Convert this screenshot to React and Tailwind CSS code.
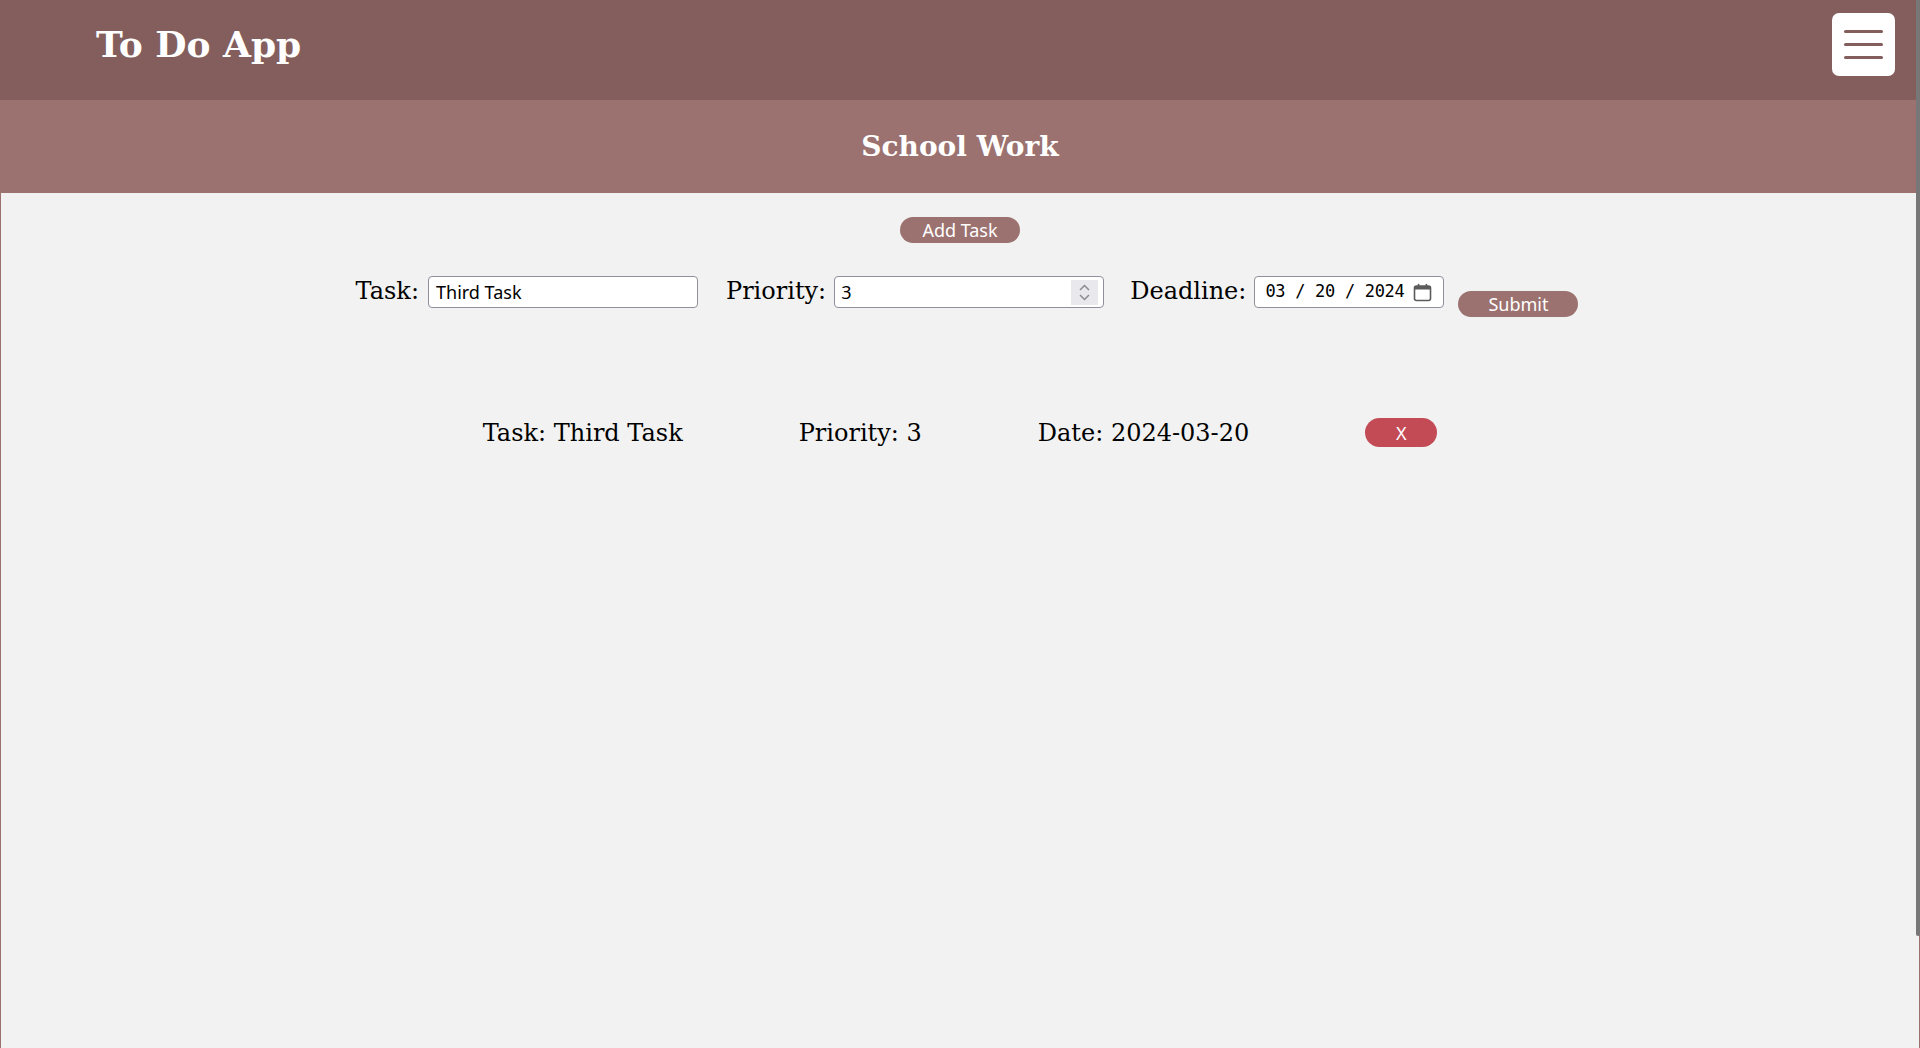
import { useState } from 'react';


function MenuButton() {
  return (
    <button className="w-[63px] h-[63px] rounded-[7px] bg-white flex flex-col items-center justify-center gap-[10px]">
      <span className="block w-[39px] h-[3px] rounded-full bg-[#835e5d]" />
      <span className="block w-[39px] h-[3px] rounded-full bg-[#835e5d]" />
      <span className="block w-[39px] h-[3px] rounded-full bg-[#835e5d]" />
    </button>
  );
}

function CalendarIcon() {
  return (
    <svg width="19" height="19" viewBox="0 0 19 19" fill="none">
      <rect x="1.5" y="3" width="16" height="14.5" rx="2" stroke="#5b5b5b" strokeWidth="1.6" />
      <rect x="1.5" y="3" width="16" height="3.5" fill="#5b5b5b" />
      <rect x="4.8" y="0.8" width="1.6" height="3.5" rx="0.8" fill="#5b5b5b" />
      <rect x="12.6" y="0.8" width="1.6" height="3.5" rx="0.8" fill="#5b5b5b" />
    </svg>
  );
}

function Spinner() {
  return (
    <div className="w-[27px] h-[25px] bg-[#e9e9ed] flex flex-col items-center justify-center gap-[3px]">
      <svg width="11" height="7" viewBox="0 0 11 7" fill="none">
        <path d="M1 6 L5.5 1.5 L10 6" stroke="#8a8a90" strokeWidth="1.5" />
      </svg>
      <svg width="11" height="7" viewBox="0 0 11 7" fill="none">
        <path d="M1 1 L5.5 5.5 L10 1" stroke="#8a8a90" strokeWidth="1.5" />
      </svg>
    </div>
  );
}


export default function App() {

  const [task, setTask] = useState('Third Task');
  const [tasks] = useState([
    { name: 'Third Task', priority: 3, date: '2024-03-20' }
  ]);

  return (
    <div className="h-screen flex flex-col bg-[#f1f2f1] font-['DejaVu_Serif',serif] overflow-hidden">

      <header className="h-[100px] shrink-0 bg-[#835e5d] flex items-center justify-between pl-[96px] pr-[25px] pb-[11px]">
        <h1 className="-mt-[2px] text-[36px] leading-[42px] font-bold text-white">To Do App</h1>
        <MenuButton />
      </header>

      <div className="h-[93px] shrink-0 bg-[#9b7270] flex items-center justify-center">
        <h2 className="text-[28px] font-bold text-white">School Work</h2>
      </div>

      <main className="flex-1 border-x border-[#9b7270]">

        <div className="flex justify-center pt-[24px]">
          <button className="w-[120px] h-[26px] rounded-full bg-[#9b7270] text-white text-[18px] leading-none font-['Noto_Sans',sans-serif]">
            Add Task
          </button>
        </div>

        <div className="flex justify-center items-start mt-[33px] pl-[14px]">
          <label className="mt-[1px] text-[24px] leading-[28px] text-black">Task:</label>
          <input
            className="ml-[9px] w-[270px] h-[32px] px-[7px] border border-[#8f8f9d] rounded-[4px] bg-white text-[18px] text-black font-['Noto_Sans',sans-serif] outline-none"
            value={task}
            onChange={(e) => setTask(e.target.value)}
          />

          <label className="ml-[28px] mt-[1px] text-[24px] leading-[28px] text-black">Priority:</label>
          <div className="ml-[8px] w-[270px] h-[32px] pl-[6px] pr-[5px] border border-[#8f8f9d] rounded-[4px] bg-white flex items-center justify-between">
            <span className="text-[18px] text-black font-['Noto_Sans',sans-serif]">3</span>
            <Spinner />
          </div>

          <label className="ml-[26px] mt-[1px] text-[24px] leading-[28px] text-black">Deadline:</label>
          <div className="ml-[8px] w-[190px] h-[32px] pl-[10px] pr-[11px] border border-[#8f8f9d] rounded-[4px] bg-white flex items-center justify-between">
            <span className="text-[17px] tracking-[-0.3px] text-black whitespace-pre font-['DejaVu_Sans_Mono',monospace]">03 / 20 / 2024</span>
            <CalendarIcon />
          </div>

          <button className="ml-[14px] mt-[15px] w-[120px] h-[26px] rounded-full bg-[#9b7270] text-white text-[18px] leading-none font-['Noto_Sans',sans-serif]">
            Submit
          </button>
        </div>

        {tasks.map((t, index) => (
          <div key={index} className="flex justify-center items-start gap-[116px] mt-[101px]">
            <p className="mt-[1px] text-[24px] leading-[28px] text-black">Task: {t.name}</p>
            <p className="mt-[1px] text-[24px] leading-[28px] text-black">Priority: {t.priority}</p>
            <p className="mt-[1px] text-[24px] leading-[28px] text-black">Date: {t.date}</p>
            <button className="w-[72px] h-[29px] rounded-full bg-[#c34b56] text-white text-[18px] leading-none font-['Noto_Sans',sans-serif]">
              X
            </button>
          </div>
        ))}

      </main>

      <div className="fixed right-0 top-0 w-[4px] h-[936px] rounded-b-[2px] bg-[#777777]" />
    </div>
  )
}
